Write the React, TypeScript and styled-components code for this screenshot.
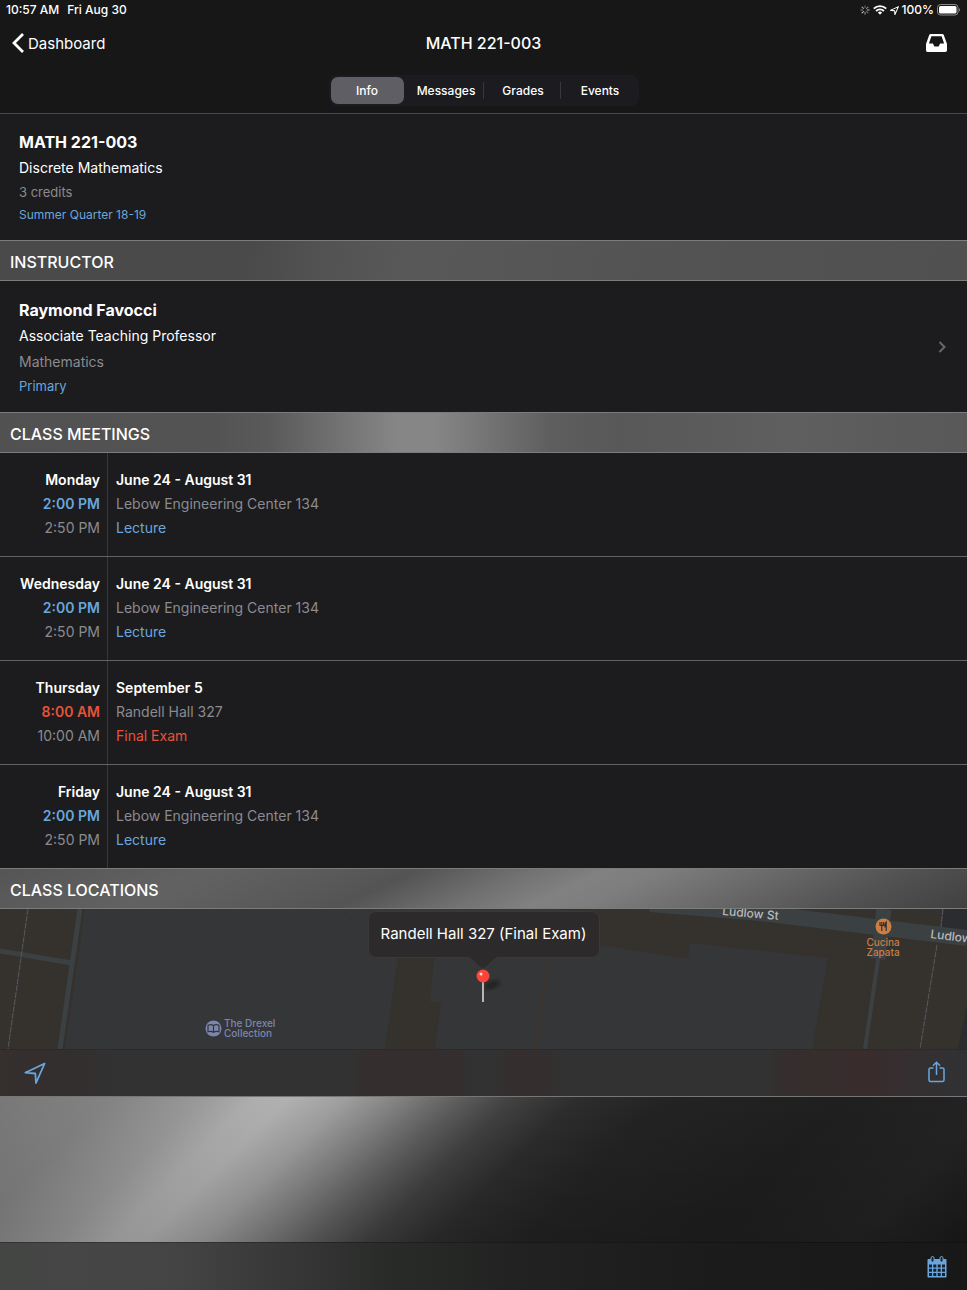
import React from "react";
import styled, { createGlobalStyle } from "styled-components";

const color = {
  blue: "#6aa6dc",
  red: "#e5533a",
  grey: "#8b8b8f",
  cell: "#1c1c1e",
  line: "#636365",
};

const GlobalStyle = createGlobalStyle`
  * { box-sizing: border-box; }
  html, body, #root { height: 100%; }
  body {
    margin: 0;
    background: #171717;
    color: #fff;
    font-family: Inter, "Liberation Sans", sans-serif;
    font-size: 14px;
  }
  h1, h2, h3, p, ul { margin: 0; padding: 0; }
  ul { list-style: none; }
  button {
    font: inherit;
    color: inherit;
    background: none;
    border: 0;
    padding: 0;
    cursor: pointer;
  }
  svg { display: block; flex: none; }
`;

const Screen = styled.div`
  display: flex;
  flex-direction: column;
  min-height: 100%;
`;

const Main = styled.main`
  display: flex;
  flex: 1;
  flex-direction: column;
`;

const Header = styled.header`
  background: #171717;
  border-bottom: 1px solid #48484a;
`;

const StatusBar = styled.div`
  display: flex;
  justify-content: space-between;
  height: 20px;
  padding: 0 6px;
  font-size: 12px;
  font-weight: 500;
  line-height: 20px;
`;

const StatusGroup = styled.div<{ $gap: number }>`
  display: flex;
  align-items: center;
  gap: ${(p) => p.$gap}px;
`;

const NavBar = styled.nav`
  display: grid;
  grid-template-columns: 1fr auto 1fr;
  align-items: center;
  height: 46px;
  padding: 0 12px;
`;

const BackLink = styled.a`
  display: flex;
  align-items: center;
  gap: 4px;
  color: #fff;
  font-size: 15px;
  text-decoration: none;
`;

const NavTitle = styled.h1`
  font-size: 16px;
  font-weight: 500;
`;

const IconButton = styled.button`
  display: flex;
  color: ${color.blue};
`;

const InboxButton = styled(IconButton)`
  justify-self: end;
  margin-right: 8px;
  color: #fff;
`;

const TabRow = styled.div`
  display: flex;
  justify-content: center;
  height: 47px;
  padding-top: 9px;
`;

const Tabs = styled.div`
  display: grid;
  grid-template-columns: repeat(4, 1fr);
  width: 310px;
  height: 31px;
  padding: 2px 0 2px 2px;
  border-radius: 8px;
  background: #1c1b1f;
`;

const Tab = styled.button<{ $active?: boolean; $divided?: boolean }>`
  position: relative;
  margin-right: ${(p) => (p.$active ? 4 : 0)}px;
  border-radius: 7px;
  background: ${(p) => (p.$active ? "#5f5e64" : "transparent")};
  font-size: 12px;
  font-weight: 500;
  &::after {
    content: "";
    position: absolute;
    top: 5px;
    right: 1px;
    width: 1px;
    height: 17px;
    background: ${(p) => (p.$divided ? "#38373c" : "transparent")};
  }
`;

const Course = styled.section`
  height: 126px;
  padding: 15px 19px;
  background: ${color.cell};
`;

const Instructor = styled.a`
  display: flex;
  align-items: center;
  justify-content: space-between;
  height: 131px;
  padding: 0 21px 0 19px;
  background: ${color.cell};
  color: #fff;
  text-decoration: none;
`;

const CellTitle = styled.h3`
  font-size: 16px;
  font-weight: 700;
  line-height: 26px;
`;

const CellLine = styled.p<{ $color?: string; $size?: number; $height?: number }>`
  color: ${(p) => p.$color || "#fff"};
  font-size: ${(p) => p.$size || 14}px;
  line-height: ${(p) => p.$height || 26}px;
`;

const SectionHeader = styled.h2<{ $shade: string }>`
  height: 41px;
  padding: 0 10px;
  border: solid #7c7c7c;
  border-width: 1px 0;
  background: ${(p) => p.$shade};
  font-size: 16px;
  font-weight: 500;
  line-height: 42px;
`;

const MeetingRow = styled.li`
  display: flex;
  height: 104px;
  border-bottom: 1px solid ${color.line};
  background: ${color.cell};
  line-height: 24px;
  &:last-child {
    height: 103px;
    border-bottom: 0;
  }
`;

const MeetingTime = styled.div`
  width: 108px;
  padding: 15px 7px 0 0;
  border-right: 1px solid #38383a;
  text-align: right;
`;

const MeetingInfo = styled.div`
  flex: 1;
  padding: 15px 8px 0;
`;

const Text = styled.p<{ $color?: string; $weight?: number }>`
  color: ${(p) => p.$color || "#fff"};
  font-weight: ${(p) => p.$weight || 400};
`;

const MapView = styled.div`
  position: relative;
  height: 140px;
  overflow: hidden;
  background: #35312d;
`;

const MapArt = styled.svg`
  width: 100%;
  height: 140px;
`;

const Callout = styled.div`
  position: absolute;
  top: 2px;
  left: 50%;
  width: 232px;
  height: 47px;
  margin-left: -116px;
  border: 1px solid #3a3838;
  border-radius: 8px;
  background: #2d2a2b;
  font-size: 15px;
  line-height: 43px;
  text-align: center;
  white-space: nowrap;
`;

const Pin = styled.svg`
  position: absolute;
  top: 47px;
  left: 50%;
  margin-left: -20px;
  transform: translateX(-1px);
`;

const Place = styled.div<{ $x: string; $y: number; $color: string; $stacked?: boolean }>`
  position: absolute;
  left: ${(p) => p.$x};
  top: ${(p) => p.$y}px;
  display: flex;
  flex-direction: ${(p) => (p.$stacked ? "column" : "row")};
  align-items: center;
  gap: 2px;
  color: ${(p) => p.$color};
  font-size: 10px;
  font-weight: 500;
  line-height: 10px;
  text-align: ${(p) => (p.$stacked ? "center" : "left")};
`;

const MapToolbar = styled.div`
  display: flex;
  align-items: center;
  justify-content: space-between;
  height: 48px;
  padding: 0 22px 0 24px;
  border-top: 1px solid #2a2a2a;
  border-bottom: 1px solid #777;
  background: linear-gradient(
    90deg,
    #352f2e 0%, #332f2e 8%, #323233 12%, #323232 36%, #352e2e 38%, #352e2e 47%, #323233 49%,
    #323232 51%, #352e2e 53%, #352e2e 56%, #323233 58%, #323232 79%, #352e2e 81%, #392c2d 90%, #343032 95%, #303134 100%
  );
`;

const Backdrop = styled.div`
  flex: 1;
  min-height: 145px;
  background:
    linear-gradient(180deg, rgba(0, 0, 0, 0), rgba(0, 0, 0, 0.15)),
    linear-gradient(
      135deg,
      #787878 0%, #838383 10%, #999 18%, #aeaeae 23%, #b1b1b1 26%, #a0a0a0 31%, #828282 36%, #606060 41%,
      #424242 46%, #2d2d2d 52%, #232323 60%, #1f1f1f 76%, #232323 90%, #1a1a1a 100%
    );
`;

const BottomBar = styled.footer`
  display: flex;
  align-items: center;
  justify-content: flex-end;
  height: 48px;
  padding: 0 20px;
  border-top: 1px solid rgba(0, 0, 0, 0.25);
  background: linear-gradient(90deg, #434643 0%, #464646 8%, #444 18%, #383838 29%, #292b29 40%, #202120 55%, #1b1b1b 75%, #171817 100%);
`;

const shades = {
  instructor: "linear-gradient(100deg, #4a4a4a 0%, #4a4a4a 26%, #535353 34%, #585858 42%, #565656 55%, #525252 75%, #505050 100%)",
  meetings:
    "linear-gradient(90deg, #515151 0%, #535353 22%, #5a5a5a 28%, #727272 35%, #868686 41%, #868686 45%, #727272 51%, #5e5e5e 57%, #585858 64%, #5f5f5f 82%, #585858 100%)",
  locations:
    "linear-gradient(155deg, #555 0%, #626262 20%, #5a5a5a 32%, #545454 40%, #727272 51%, #818181 58%, #7e7e7e 63%, #6a6a6a 74%, #525252 87%, #404040 100%)",
};

const meetings = [
  { day: "Monday", start: "2:00 PM", end: "2:50 PM", dates: "June 24 - August 31", place: "Lebow Engineering Center 134", kind: "Lecture" },
  { day: "Wednesday", start: "2:00 PM", end: "2:50 PM", dates: "June 24 - August 31", place: "Lebow Engineering Center 134", kind: "Lecture" },
  { day: "Thursday", start: "8:00 AM", end: "10:00 AM", dates: "September 5", place: "Randell Hall 327", kind: "Final Exam" },
  { day: "Friday", start: "2:00 PM", end: "2:50 PM", dates: "June 24 - August 31", place: "Lebow Engineering Center 134", kind: "Lecture" },
];

const Spinner = () => (
  <svg width="10" height="10" viewBox="0 0 10 10" stroke="#fff" strokeWidth="1" strokeLinecap="round" aria-hidden="true">
    {[0, 45, 90, 135, 180, 225, 270, 315].map((a, i) => (
      <path key={a} d="M5 .8V2.8" transform={`rotate(${a} 5 5)`} opacity={0.35 + ((i * 3) % 8) * 0.06} />
    ))}
  </svg>
);

const Wifi = () => (
  <svg width="14" height="10" viewBox="0 0 14 10" fill="none" stroke="#fff" strokeWidth="1.9" aria-hidden="true">
    <path d="M.8 3.7a8.8 8.8 0 0 1 12.4 0" />
    <path d="M3.1 6a5.5 5.5 0 0 1 7.8 0" />
    <path d="M7 9.8 4.9 7.6a3 3 0 0 1 4.2 0z" fill="#fff" stroke="none" />
  </svg>
);

const LocationArrow = ({ size, stroke, width }: { size: number; stroke: string; width: number }) => (
  <svg width={size} height={size} viewBox="0 0 22 22" fill="none" stroke={stroke} strokeWidth={width} strokeLinejoin="round" aria-hidden="true">
    <path d="M20.600 1.500 1.300 10.700l10 .8.700 9.500z" />
  </svg>
);

const Battery = () => (
  <svg width="24" height="12" viewBox="0 0 24 12" aria-hidden="true">
    <rect x=".5" y=".5" width="20.5" height="10.5" rx="3" fill="none" stroke="#8a8a8a" />
    <rect x="2" y="2" width="17.5" height="7.5" rx="1.6" fill="#fff" />
    <path d="M22 4v3.6c1.3-.4 1.3-3.2 0-3.6z" fill="#8a8a8a" />
  </svg>
);

export default function App() {
  return (
    <Screen>
      <GlobalStyle />
      <Header>
        <StatusBar>
          <StatusGroup $gap={8}>
            <span>10:57 AM</span>
            <span>Fri Aug 30</span>
          </StatusGroup>
          <StatusGroup $gap={3}>
            <Spinner />
            <Wifi />
            <LocationArrow size={9} stroke="#fff" width={2.6} />
            <span>100%</span>
            <Battery />
          </StatusGroup>
        </StatusBar>
        <NavBar>
          <BackLink href="#dashboard">
            <svg width="12" height="20" viewBox="0 0 12 20" fill="none" stroke="#fff" strokeWidth="2.8" aria-hidden="true">
              <path d="M11 1 2 10l9 9" />
            </svg>
            Dashboard
          </BackLink>
          <NavTitle>MATH 221-003</NavTitle>
          <InboxButton aria-label="Inbox">
            <svg width="21" height="18" viewBox="0 0 21 18" fill="currentColor" fillRule="evenodd" aria-hidden="true">
              <path d="M4.8 0h11.400c.8 0 1.300.4 1.600 1.100L21 10v6.300c0 1-.7 1.700-1.700 1.700H1.700C.7 18 0 17.300 0 16.300V10l3.200-8.900C3.500.4 4 0 4.800 0zM5.400 2.300 2.900 9.500h4l1.500 3h4.200l1.500-3h4l-2.500-7.200z" />
            </svg>
          </InboxButton>
        </NavBar>
        <TabRow>
          <Tabs role="tablist">
            <Tab role="tab" aria-selected="true" $active>Info</Tab>
            <Tab role="tab" aria-selected="false" $divided>Messages</Tab>
            <Tab role="tab" aria-selected="false" $divided>Grades</Tab>
            <Tab role="tab" aria-selected="false">Events</Tab>
          </Tabs>
        </TabRow>
      </Header>

      <Main>
        <Course>
          <CellTitle>MATH 221-003</CellTitle>
          <CellLine>Discrete Mathematics</CellLine>
          <CellLine $color={color.grey} $size={13} $height={22}>3 credits</CellLine>
          <CellLine $color={color.blue} $size={12} $height={24}>Summer Quarter 18-19</CellLine>
        </Course>

        <SectionHeader $shade={shades.instructor}>INSTRUCTOR</SectionHeader>
        <Instructor href="#instructor">
          <div>
            <CellTitle>Raymond Favocci</CellTitle>
            <CellLine>Associate Teaching Professor</CellLine>
            <CellLine $color={color.grey}>Mathematics</CellLine>
            <CellLine $color={color.blue} $size={13} $height={22}>Primary</CellLine>
          </div>
          <svg width="8" height="12" viewBox="0 0 8 12" fill="none" stroke="#68686b" strokeWidth="2" aria-hidden="true">
            <path d="m1.5 1 5 5-5 5" />
          </svg>
        </Instructor>

        <SectionHeader $shade={shades.meetings}>CLASS MEETINGS</SectionHeader>
        <ul>
          {meetings.map((m) => {
            const accent = m.kind === "Final Exam" ? color.red : color.blue;
            return (
              <MeetingRow key={m.day}>
                <MeetingTime>
                  <Text $weight={600}>{m.day}</Text>
                  <Text $weight={600} $color={accent}>{m.start}</Text>
                  <Text $color={color.grey}>{m.end}</Text>
                </MeetingTime>
                <MeetingInfo>
                  <Text $weight={600}>{m.dates}</Text>
                  <Text $color={color.grey}>{m.place}</Text>
                  <Text $color={accent}>{m.kind}</Text>
                </MeetingInfo>
              </MeetingRow>
            );
          })}
        </ul>

        <SectionHeader $shade={shades.locations}>CLASS LOCATIONS</SectionHeader>
        <MapView>
          <MapArt viewBox="0 0 967 140" preserveAspectRatio="xMidYMid slice" aria-hidden="true">
            <rect width="967" height="140" fill="#35312d" />
            <path d="M85 0H340L398 49 385 140H65z" fill="#353638" />
            <path d="M340 0 560 0 600 6V36L688 50 690 34 828 49 812 140H385L398 49z" fill="#353638" />
            <path d="M600 0h100v32l-100 5z" fill="#35312d" />
            <path d="M398 49h36l-4 44h11l-6 47h-50z" fill="#35312d" />
            <path d="M548 49 536 140" stroke="#3b3430" strokeWidth="4" />
            <path d="M944 0h23v22l-25-4zM967 95v45h-9z" fill="#2b2c2f" />
            <g stroke="#3b4043" fill="none">
              <path d="m0 42 72 12" strokeWidth="5" />
              <path d="M80 0 60 140" strokeWidth="5" />
              <path d="m884 0-6 50" strokeWidth="15" />
              <path d="m881 30-16 110" strokeWidth="4" />
              <path d="m650-5 110 9 207 25" strokeWidth="16" />
            </g>
            <g stroke="#555a61" fill="none" strokeDasharray="6 1">
              <path d="M28 0 8 140" />
              <path d="m943 0-2 18M937 36 920 140" />
            </g>
            <g fill="#b9babd" fontSize="12" fontWeight="500">
              <text x="722" y="6" transform="rotate(5 722 6)">Ludlow St</text>
              <text x="930" y="29" transform="rotate(7 930 29)">Ludlow St</text>
            </g>
          </MapArt>
          <Place $x="21.2%" $y={109} $color="#7c86ad">
            <svg width="17" height="17" viewBox="0 0 17 17" aria-hidden="true">
              <circle cx="8.5" cy="8.5" r="8" fill="#7c86ad" />
              <path d="M3 5.200c2-.9 4-.7 5.500.4 1.500-1.100 3.500-1.300 5.500-.4v6.600c-2-.7-4-.5-5.500.5-1.500-1-3.500-1.200-5.500-.5zM8.500 5.600v6.600" fill="none" stroke="#353638" strokeWidth="1.2" />
            </svg>
            <span>The Drexel<br />Collection</span>
          </Place>
          <Place $x="89.6%" $y={9} $color="#c97e45" $stacked>
            <svg width="17" height="17" viewBox="0 0 17 17" aria-hidden="true">
              <circle cx="8.5" cy="8.5" r="8" fill="#c97e45" />
              <path d="M5 4v3.500h3.600V4M6.800 4v9M11.200 13V4c-1.200 1-1.400 3-1.200 5h1.200" fill="none" stroke="#35312d" strokeWidth="1.2" />
            </svg>
            <span>Cucina<br />Zapata</span>
          </Place>
          <Callout>Randell Hall 327 (Final Exam)</Callout>
          <Pin width="40" height="50" viewBox="0 0 40 50" aria-hidden="true">
            <defs>
              <filter id="soft"><feGaussianBlur stdDeviation="2" /></filter>
            </defs>
            <path d="M5 1c6 1 9 9 15 11 6-2 9-10 15-11z" fill="#2d2a2b" />
            <ellipse cx="29" cy="29" rx="8" ry="4" transform="rotate(-20 29 29)" fill="#1c1c1e" opacity=".8" filter="url(#soft)" />
            <path d="M20 24v22" stroke="#b5b5b5" strokeWidth="2" />
            <circle cx="20" cy="20" r="6.5" fill="#fb443a" />
            <circle cx="18" cy="18" r="1.5" fill="#ffd9d6" />
          </Pin>
        </MapView>
        <MapToolbar>
          <IconButton aria-label="Show my location">
            <LocationArrow size={22} stroke={color.blue} width={1.8} />
          </IconButton>
          <IconButton aria-label="Share">
            <svg width="17" height="24" viewBox="0 0 17 24" fill="none" stroke="currentColor" strokeWidth="1.5" aria-hidden="true">
              <path d="M5.500 7H2.500C1.500 7 1 7.500 1 8.500v10.500c0 1 .5 1.500 1.500 1.500h12c1 0 1.500-.5 1.500-1.500V8.500c0-1-.5-1.500-1.500-1.500h-3M8.500 14V1.500M4.900 4.800 8.500 1.200l3.600 3.600" />
            </svg>
          </IconButton>
        </MapToolbar>
        <Backdrop />
      </Main>

      <BottomBar>
        <IconButton aria-label="Calendar">
          <svg width="20" height="22" viewBox="0 0 20 22" aria-hidden="true">
            <path d="M1.500 3h17c.6 0 1 .4 1 1v16.500c0 .6-.4 1-1 1h-17c-.6 0-1-.4-1-1V4c0-.6.4-1 1-1z" fill={color.blue} />
            <path d="M2 8.500h3v3H2zM6.300 8.500h3v3h-3zM10.700 8.500h3v3h-3zM15 8.500h3v3h-3zM2 12.700h3v3H2zM6.300 12.700h3v3h-3zM10.700 12.700h3v3h-3zM15 12.700h3v3h-3zM2 17h3v3H2zM6.300 17h3v3h-3zM10.700 17h3v3h-3zM15 17h3v3h-3z" fill="#18222c" />
            <rect x="4" y=".5" width="3" height="5.5" rx="1.5" fill="#18222c" stroke={color.blue} />
            <rect x="13" y=".5" width="3" height="5.5" rx="1.5" fill="#18222c" stroke={color.blue} />
          </svg>
        </IconButton>
      </BottomBar>
    </Screen>
  );
}
